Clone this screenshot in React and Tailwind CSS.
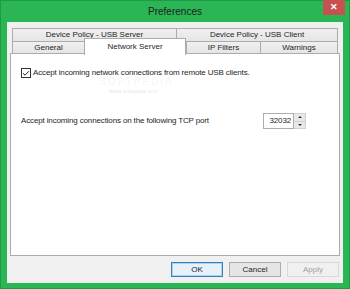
import { Check } from "lucide-react";

const font = { fontFamily: '"Liberation Sans", Arial, sans-serif' };

const Tab = ({ label, className = "" }) => (
  <div
    className={`flex items-center justify-center border border-[#acacac] bg-gradient-to-b from-[#f0f0f0] to-[#e5e5e5] text-[8px] text-[#1e1e1e] ${className}`}
  >
    {label}
  </div>
);

const Button = ({ label, variant }) => {
  const styles = {
    default: "border-[#3c7fb1] bg-[#e5f1fb] text-[#1e1e1e] shadow-[inset_0_0_0_1px_#a9d1f5]",
    normal: "border-[#acacac] bg-[#e5e5e5] text-[#1e1e1e]",
    disabled: "border-[#d9d9d9] bg-[#f0f0f0] text-[#a0a0a0]",
  };
  return (
    <div
      className={`w-[52px] h-[15px] flex items-center justify-center border text-[8px] ${styles[variant]}`}
    >
      {label}
    </div>
  );
};

export default function App() {
  return (
    <div
      className="w-[350px] h-[289px] bg-[#2bb656] border border-[#1f9b46] flex flex-col"
      style={font}
    >
      {/* Title bar */}
      <div className="relative h-[21px] flex items-center justify-center">
        <span className="text-[10px] text-[#202020]">Preferences</span>
        <div className="absolute top-[-1px] right-[4px] w-[22px] h-[15px] bg-[#c75050] flex items-center justify-center text-white text-[9px] font-bold">
          ✕
        </div>
      </div>

      {/* Client area */}
      <div className="flex-1 mx-[6px] mb-[5px] bg-[#f0f0f0] flex flex-col pt-[6px] px-[3px]">
        {/* Tabs */}
        <div className="relative px-[2px]">
          <div className="flex h-[14px]">
            <Tab label="Device Policy - USB Server" className="w-[165px]" />
            <Tab label="Device Policy - USB Client" className="flex-1 -ml-px" />
          </div>
          <div className="flex h-[13px] -mt-px">
            <Tab label="General" className="w-[73px]" />
            <div className="w-[101px]" />
            <Tab label="IP Filters" className="w-[75px]" />
            <Tab label="Warnings" className="flex-1 -ml-px" />
          </div>
          <div className="absolute left-[74px] top-[10px] w-[102px] h-[17px] bg-white border border-b-0 border-[#acacac] z-10 flex items-start justify-center pt-[2px] text-[8px] text-[#1e1e1e]">
            Network Server
          </div>
        </div>

        {/* Panel */}
        <div className="relative h-[203px] bg-white border border-[#acacac] -mt-px px-[10px] pt-[13px] text-[8px] tracking-[-0.14px] text-[#1e1e1e]">
          <div className="flex items-center gap-[2px]">
            <div className="w-[10px] h-[10px] border border-[#333] bg-white flex items-center justify-center">
              <Check size={9} strokeWidth={3} className="text-[#222]" />
            </div>
            <span>Accept incoming network connections from remote USB clients.</span>
          </div>

          {/* Softpedia watermark */}
          <div className="absolute left-[88px] top-[23px] text-[10px] leading-[10px] font-bold tracking-[2px] text-[#000]/[0.05]">
            SOFTPEDIA
          </div>
          <div className="absolute left-[98px] top-[34px] text-[6px] leading-[6px] text-[#000]/[0.15]">
            www.softpedia.com
          </div>

          <div className="flex items-center justify-between mt-[34px] pr-[23px]">
            <span>Accept incoming connections on the following TCP port</span>
            <div className="flex items-stretch h-[16px]">
              <div className="w-[31px] border border-[#abadb3] bg-white flex items-center justify-end pr-[2px] text-[8px]">
                32032
              </div>
              <div className="w-[12px] flex flex-col border border-l-0 border-[#d0d0d0] bg-[#e8e8e8]">
                <div className="flex-1 flex items-center justify-center border-b border-[#d0d0d0]">
                  <div className="w-0 h-0 border-l-[2px] border-r-[2px] border-b-[2px] border-l-transparent border-r-transparent border-b-[#333]" />
                </div>
                <div className="flex-1 flex items-center justify-center">
                  <div className="w-0 h-0 border-l-[2px] border-r-[2px] border-t-[2px] border-l-transparent border-r-transparent border-t-[#333]" />
                </div>
              </div>
            </div>
          </div>
        </div>

        {/* Buttons */}
        <div className="flex justify-end gap-[6px] mt-[6px] pr-[1px]">
          <Button label="OK" variant="default" />
          <Button label="Cancel" variant="normal" />
          <Button label="Apply" variant="disabled" />
        </div>
      </div>
    </div>
  );
}
